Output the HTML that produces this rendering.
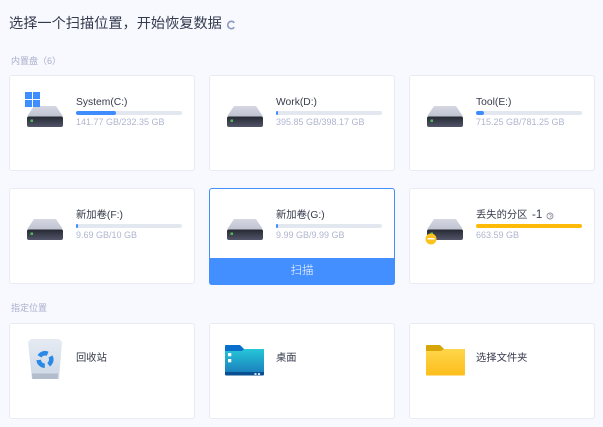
<!DOCTYPE html>
<html><head><meta charset="utf-8">
<style>
html,body{margin:0;padding:0;width:603px;height:427px;overflow:hidden;background:#f8f9ff;font-family:"Liberation Sans","Noto Sans CJK SC",sans-serif;}
.a{position:absolute;white-space:nowrap}
.card{position:absolute;width:186px;background:#fff;border:1px solid #e8ebf4;border-radius:3px;box-sizing:border-box}
.n{position:absolute;white-space:nowrap;font-size:10.3px;line-height:14px;color:#363b4b;left:76px}
.bar{position:absolute;height:3.500px;width:106px;background:#e3e8f0;border-radius:2px;left:76px}
.bar i{display:block;height:3.500px;background:#3f8cff;border-radius:2px}
.s{position:absolute;white-space:nowrap;font-size:9px;line-height:12px;color:#b0b5cf;left:76px}
svg{position:absolute}
</style></head><body>
<svg width="0" height="0" style="position:absolute"><defs>
<linearGradient id="t" x1="0" y1="0" x2="0" y2="1"><stop offset="0" stop-color="#d5d8e2"/><stop offset="1" stop-color="#bfc3d1"/></linearGradient>
<linearGradient id="b" x1="0" y1="0" x2="0" y2="1"><stop offset="0" stop-color="#262932"/><stop offset="1" stop-color="#525569"/></linearGradient>
<linearGradient id="bl" x1="0" y1="0" x2="0" y2="1"><stop offset="0" stop-color="#25c6d8"/><stop offset="1" stop-color="#1b82bd"/></linearGradient>
<linearGradient id="ye" x1="0" y1="0" x2="0" y2="1"><stop offset="0" stop-color="#ffd64a"/><stop offset="1" stop-color="#fdbd1c"/></linearGradient>
<linearGradient id="bin" x1="0" y1="0" x2="0" y2="1"><stop offset="0" stop-color="#e6ebf3"/><stop offset="1" stop-color="#ccd8e6"/></linearGradient>
<g id="disk"><path d="M6 1.500Q6.500 0 8 0H28Q29.500 0 30 1.500L36 10.500H0Z" fill="url(#t)"/><path d="M0 12Q0 10.500 2 10.500H34Q36 10.500 36 12V19Q36 21 34 21H2Q0 21 0 19Z" fill="url(#b)"/><rect x="3.500" y="13.500" width="2.500" height="2.500" fill="#53b85a"/></g>
</defs></svg>

<div class="a" style="left:9px;top:14px;font-size:14.200px;line-height:20px;color:#333a4d">选择一个扫描位置，开始恢复数据</div>
<svg style="left:226px;top:20px" width="10" height="10" viewBox="0 0 10 10"><path d="M8.300 2.700A3.700 3.700 0 1 0 8.300 7.300" fill="none" stroke="#8d97bd" stroke-width="1.600"/></svg>

<div class="a" style="left:11px;top:55px;font-size:9px;line-height:12px;color:#a9aecb">内置盘（6）</div>

<div class="card" style="left:9px;top:75px;height:96px"></div>
<div class="card" style="left:209px;top:75px;height:96px"></div>
<div class="card" style="left:409px;top:75px;height:96px"></div>
<div class="card" style="left:9px;top:188px;height:96px"></div>
<div class="card" style="left:209px;top:188px;height:97px;border-color:#448fff"></div>
<div class="a" style="left:209px;top:258px;width:186px;height:27px;background:#448fff;border-radius:0 0 3px 3px;color:#fff;font-size:11.500px;line-height:26px;text-align:center;font-weight:300">扫描</div>
<div class="card" style="left:409px;top:188px;height:96px"></div>

<svg style="left:27px;top:106px" width="36" height="21"><use href="#disk"/></svg>
<svg style="left:227px;top:106px" width="36" height="21"><use href="#disk"/></svg>
<svg style="left:427px;top:106px" width="36" height="21"><use href="#disk"/></svg>
<svg style="left:27px;top:219px" width="36" height="21"><use href="#disk"/></svg>
<svg style="left:227px;top:219px" width="36" height="21"><use href="#disk"/></svg>
<svg style="left:427px;top:219px" width="36" height="21"><use href="#disk"/></svg>

<svg style="left:25px;top:92px" width="15" height="15"><rect width="7" height="7" fill="#3f8eff"/><rect x="8" width="7" height="7" fill="#3f8eff"/><rect y="8" width="7" height="7" fill="#3f8eff"/><rect x="8" y="8" width="7" height="7" fill="#3f8eff"/></svg>
<svg style="left:425px;top:233px" width="12" height="12"><circle cx="6" cy="6" r="5.500" fill="#fbc21e"/><rect x="2.500" y="5" width="7" height="1.500" fill="#fff"/></svg>

<div class="n" style="top:96px">System(C:)</div>
<div class="bar" style="top:111px"><i style="width:40px"></i></div>
<div class="s" style="top:116px">141.77 GB/232.35 GB</div>

<div class="n" style="top:96px;left:276px">Work(D:)</div>
<div class="bar" style="top:111px;left:276px"><i style="width:2px"></i></div>
<div class="s" style="top:116px;left:276px">395.85 GB/398.17 GB</div>

<div class="n" style="top:96px;left:476px">Tool(E:)</div>
<div class="bar" style="top:111px;left:476px"><i style="width:8px"></i></div>
<div class="s" style="top:116px;left:476px">715.25 GB/781.25 GB</div>

<div class="n" style="top:209px">新加卷(F:)</div>
<div class="bar" style="top:224px"><i style="width:2px"></i></div>
<div class="s" style="top:229px">9.69 GB/10 GB</div>

<div class="n" style="top:209px;left:276px">新加卷(G:)</div>
<div class="bar" style="top:224px;left:276px"><i style="width:2px"></i></div>
<div class="s" style="top:229px;left:276px">9.99 GB/9.99 GB</div>

<div class="n" style="top:209px;left:476px">丢失的分区</div>
<div class="n" style="top:208px;left:532px;font-size:11.500px">-1</div>
<svg style="left:545.500px;top:212px" width="8" height="8" viewBox="0 0 8 8"><circle cx="4" cy="4" r="3" fill="none" stroke="#8d8f9f" stroke-width=".9"/><path d="M3 3.200Q4 2 5 3T4 5M4 5.500V6" fill="none" stroke="#8d8f9f" stroke-width=".7"/></svg>
<div class="bar" style="top:224px;left:476px;background:#fdba09"></div>
<div class="s" style="top:229px;left:476px">663.59 GB</div>

<div class="a" style="left:11px;top:302px;font-size:9px;line-height:12px;color:#a9aecb">指定位置</div>

<div class="card" style="left:9px;top:323px;height:96px"></div>
<div class="card" style="left:209px;top:323px;height:96px"></div>
<div class="card" style="left:409px;top:323px;height:96px"></div>

<svg style="left:28px;top:339px" width="34" height="41" viewBox="0 0 34 41">
<path d="M0 3L3 0H31L34 3L31 40H4Z" fill="url(#bin)"/><path d="M4 34.500H30L29.500 40H4.500Z" fill="#b3bccb"/>
<circle cx="17" cy="20.500" r="6.300" fill="none" stroke="#2a88e6" stroke-width="4.500" stroke-dasharray="9.200 4" transform="rotate(-150 17 20.500)"/>
</svg>
<div class="n" style="top:352px">回收站</div>

<svg style="left:225px;top:345px" width="40" height="31" viewBox="0 0 40 31">
<path d="M0 1Q0 0 1 0H15L19 4H39V12H0Z" fill="#0a6ecb"/><path d="M0 6H17L19 4H39V27H0Z" fill="url(#bl)"/><path d="M0 27H39V29Q39 30.500 38 30.500H1Q0 30.500 0 29Z" fill="#0a4f92"/>
<rect x="3" y="8" width="3.300" height="3.300" fill="#fff"/><rect x="3" y="14" width="3.300" height="3.300" fill="#fff"/><rect x="29.500" y="28" width="2" height="2" fill="#cfe4f5"/><rect x="33" y="28" width="2" height="2" fill="#cfe4f5"/>
</svg>
<div class="n" style="top:352px;left:276px">桌面</div>

<svg style="left:426px;top:345px" width="40" height="31" viewBox="0 0 40 31">
<path d="M0 1Q0 0 1 0H14L18 4H39V12H0Z" fill="#d8a508"/><path d="M0 6H15L18 4H38Q39 4 39 5V29Q39 30.500 38 30.500H1Q0 30.500 0 29Z" fill="url(#ye)"/>
</svg>
<div class="n" style="top:352px;left:476px">选择文件夹</div>
</body></html>
